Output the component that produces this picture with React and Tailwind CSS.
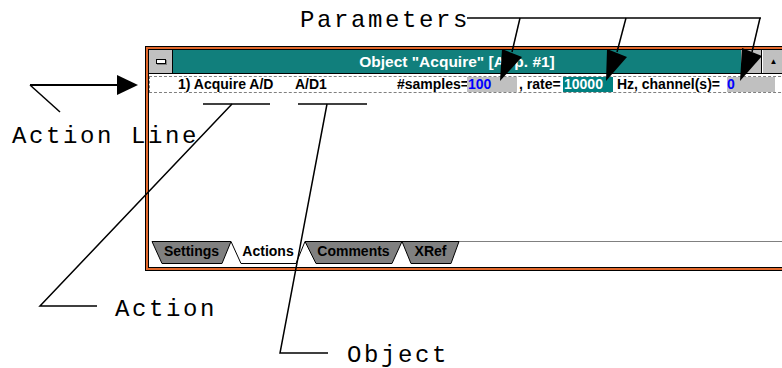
const tabs = [
  { label: 'Settings', w: 'w-[79px]' },
  { label: 'Actions', w: 'w-[74px]' },
  { label: 'Comments', w: 'w-[97px]' },
  { label: 'XRef', w: 'w-[57px]' },
];

// trapezoid tabs, coords relative to the client left edge
const tabShapes = [
  '3,0.5 82,0.5 73,22.5 13,22.5',
  '156,0.5 253,0.5 243,22.5 167,22.5',
  '253,0.5 310,0.5 302,22.5 262,22.5',
];

const label = "absolute font-['Liberation_Mono','Courier_New',monospace] text-[24px] tracking-[2.6px] leading-[20px] text-black";

const WindowFrame = () => (
  <div className="w-[680px] h-[225px] border border-black bg-[#e2682c] p-[2px]">
    <div className="h-full border border-black bg-white flex flex-col font-['Liberation_Sans',Arial,sans-serif]">
      {/* title bar */}
      <div className="flex h-[24px] border-b border-black bg-[#117f7c]">
        <div className="w-[24px] border-r border-black bg-[#c0c0c0] flex items-center justify-center">
          <div className="w-[10px] h-[5px] bg-white border border-black shadow-[1px_1px_0_#808080]"></div>
        </div>
        <div className="w-[568px] text-center text-white font-bold text-[15.5px] leading-[23px]">
          Object "Acquire" [App. #1]
        </div>
        <div className="w-[21px] border-r border-black bg-[#c0c0c0] flex items-center justify-center text-[8px]">▼</div>
        <div className="w-[22px] bg-[#c0c0c0] flex items-center justify-center text-[8px] border-l border-white">▲</div>
      </div>

      {/* action line */}
      <div className="mt-[2px] h-[17px] flex items-stretch border-y border-l border-dashed border-[#808080] pl-[28px] text-[14px] font-bold leading-[15px] text-black whitespace-pre">
        <span className="w-[117px]">1) Acquire A/D</span>
        <span className="w-[102px]">A/D1</span>
        <span className="w-[70px]">#samples=</span>
        <span className="w-[50px] bg-[#c0c0c0] text-[#0000ff] pl-[1px]">100</span>
        <span className="w-[46px] pl-[2px]">, rate=</span>
        <span className="w-[50px] bg-[#008080] text-white pl-[1px]">10000</span>
        <span className="w-[114px]"> Hz, channel(s)=</span>
        <span className="w-[48px] bg-[#c0c0c0] text-[#0000ff]">0</span>
      </div>

      <div className="flex-1"></div>

      {/* tab strip */}
      <div className="relative h-[26px]">
        <svg className="absolute inset-0" width="640" height="26">
          <line x1="310" y1="0.5" x2="640" y2="0.5" stroke="#808080" />
          {tabShapes.map((pts, i) => (
            <polygon key={i} points={pts} fill="#808080" stroke="#000" strokeWidth="1" />
          ))}
          <polyline points="82,0.5 92,22.5 147,22.5 156,0.5" fill="#fff" stroke="#000" />
        </svg>
        <div className="relative flex pl-[3px] text-[14px] font-bold leading-[21px] text-black">
          {tabs.map(t => (
            <span key={t.label} className={`${t.w} text-center`}>{t.label}</span>
          ))}
        </div>
      </div>
    </div>
  </div>
);

export default function App() {
  return (
    <div className="relative w-[782px] h-[368px] overflow-hidden bg-white">
      <div className="pt-[46px] pl-[145px]">
        <WindowFrame />
      </div>

      {/* callout drawing */}
      <svg className="absolute inset-0 pointer-events-none" width="782" height="368">
        <g stroke="#000" fill="none" strokeWidth="1.5">
          <line x1="30" y1="85" x2="118" y2="85" strokeWidth="2" />
          <line x1="30" y1="85" x2="60" y2="112" />
          <line x1="203" y1="104" x2="270" y2="104" />
          <line x1="298" y1="104" x2="367" y2="104" />
          <polyline points="232,104 40,306 97,306" />
          <polyline points="327,104 280,353 328,353" />
          <line x1="467" y1="18" x2="761" y2="18" />
          <line x1="520" y1="18" x2="512" y2="52" />
          <line x1="626" y1="18" x2="617" y2="52" />
          <line x1="760" y1="18" x2="752" y2="52" />
        </g>
        <g fill="#000">
          <polygon points="117,75 138,85 117,95" />
          <polygon points="502,49 522,57 500,81" />
          <polygon points="607,49 627,57 606,81" />
          <polygon points="742,48 762,56 740,81" />
        </g>
      </svg>

      <div className={`${label} left-[300px] top-[11px]`}>Parameters</div>
      <div className={`${label} left-[12px] top-[127px]`}>Action Line</div>
      <div className={`${label} left-[115px] top-[300px]`}>Action</div>
      <div className={`${label} left-[347px] top-[346px]`}>Object</div>
    </div>
  );
}
